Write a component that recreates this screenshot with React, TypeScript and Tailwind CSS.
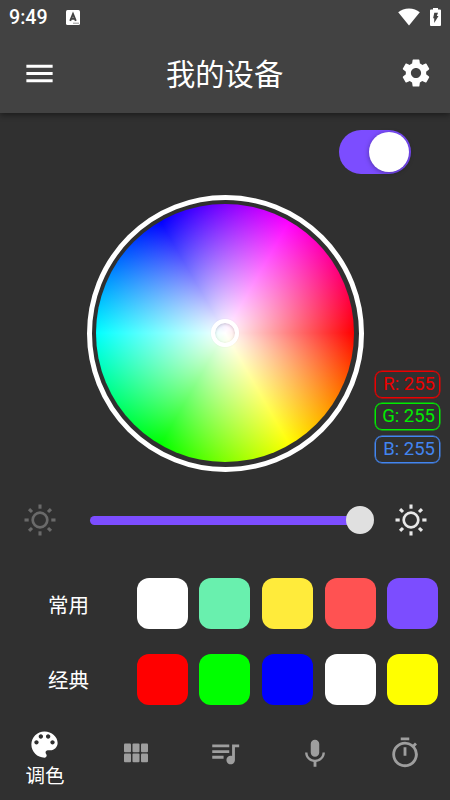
import { MdMenu, MdMic, MdOutlineTimer, MdQueueMusic, MdSettings } from 'react-icons/md';

const commonColors = ['#ffffff', '#69f0ae', '#ffeb3b', '#ff5252', '#7c4dff'];
const classicColors = ['#ff0000', '#00ff00', '#0000ff', '#ffffff', '#ffff00'];

const cjk = "font-['Noto_Sans_CJK_SC',sans-serif]";

function StatusBar() {
  return (
    <div className="flex h-[34px] items-center pl-[9px] pr-[9px]">
      <span className="w-[39px] pt-[2px] text-[19.600px] leading-none font-medium">9:49</span>
      <svg className="ml-[18px]" width="14" height="15" viewBox="0 0 14 15">
        <rect width="14" height="15" rx="1.5" fill="#fff" />
        <path d="M4.2 10.8 7 4l2.800 6.800M5.2 8.800h3.600" fill="none" stroke="#424242" strokeWidth="1.900" />
        <path d="M7 13.2h6" stroke="#777" strokeWidth="0.8" />
      </svg>
      <svg className="ml-auto" width="22" height="18" viewBox="0 0 22 18">
        <path d="M11 17.5 0.2 4.2C3 1.8 6.8 0.4 11 0.4s8 1.4 10.8 3.8z" fill="#fff" />
      </svg>
      <svg className="ml-[10px]" width="11" height="18" viewBox="0 0 11 18">
        <path d="M3 0h5v1.6h2a1 1 0 0 1 1 1V17a1 1 0 0 1-1 1H1a1 1 0 0 1-1-1V2.600a1 1 0 0 1 1-1h2z" fill="#fff" />
        <path d="M4.300 4.800h3.700L6.800 8h1.700L4.200 15V10.300H3.100z" fill="#424242" />
      </svg>
    </div>
  );
}

function Header() {
  return (
    <header className="h-[113px] bg-[#424242] shadow-[0_2px_6px_rgba(0,0,0,0.45)]">
      <StatusBar />
      <div className="flex h-[78px] items-center pl-[22px] pr-[17px]">
        <MdMenu size={35} />
        <h1 className={`ml-[109px] text-[29.300px] leading-none font-normal ${cjk}`}>我的设备</h1>
        <MdSettings className="ml-auto" size={34} />
      </div>
    </header>
  );
}

function ColorWheel() {
  return (
    <div className="h-[277px] w-[277px] rounded-full border-[5px] border-white p-[4.5px]">
      <div className="flex h-full w-full items-center justify-center rounded-full bg-[radial-gradient(closest-side,#fff,rgba(255,255,255,0)),conic-gradient(from_90deg,#f00,#ff0,#0f0,#0ff,#00f,#f0f,#f00)]">
        <div className="h-[28px] w-[28px] rounded-full border-4 border-white shadow-[0_0_2px_rgba(0,0,0,0.06),inset_0_1px_3px_rgba(0,0,0,0.18)]" />
      </div>
    </div>
  );
}

function Channel({ label, className }: { label: string; className: string }) {
  return (
    <div className={`flex h-[27px] w-[65px] items-center justify-end rounded-[7px] border pr-[4px] text-[18.500px] leading-none shadow-[0_0_0_0.5px_currentColor] ${className}`}>
      {label}
    </div>
  );
}

function Sun({ color }: { color: string }) {
  return (
    <svg width="32" height="32" viewBox="-16 -16 32 32" fill="none" stroke={color}>
      <circle r="7.300" strokeWidth="2.700" />
      {[0, 45, 90, 135, 180, 225, 270, 315].map((angle) => (
        <path key={angle} d="M11.300 0h4.200" strokeWidth="3.100" transform={`rotate(${angle})`} />
      ))}
    </svg>
  );
}

function Palette() {
  return (
    <svg width="35" height="35" viewBox="0 0 24 24" fill="currentColor">
      <path d="M12 3c-4.970 0-9 4.030-9 9s4.030 9 9 9c.83 0 1.500-.67 1.500-1.500 0-.39-.15-.74-.39-1.010-.23-.26-.38-.61-.38-.99 0-.83.67-1.500 1.500-1.500H16c2.760 0 5-2.240 5-5 0-4.420-4.030-8-9-8zm-5.500 9c-.83 0-1.500-.67-1.500-1.500S5.670 9 6.500 9 8 9.670 8 10.500 7.330 12 6.500 12zm3-4C8.670 8 8 7.330 8 6.500S8.670 5 9.500 5s1.500.67 1.500 1.500S10.330 8 9.500 8zm5 0c-.83 0-1.500-.67-1.500-1.500S13.670 5 14.500 5s1.500.67 1.500 1.500S15.330 8 14.500 8zm3 4c-.83 0-1.500-.67-1.500-1.500S16.670 9 17.500 9s1.500.67 1.500 1.500-.67 1.500-1.500 1.500z" />
    </svg>
  );
}

function Swatches({ title, colors }: { title: string; colors: string[] }) {
  return (
    <div className="flex h-[51.500px] items-center pl-[48px]">
      <span className={`w-[88.500px] text-[20.500px] leading-none ${cjk}`}>{title}</span>
      <div className="flex gap-[11.500px]">
        {colors.map((color, i) => (
          <div key={i} className="h-[51.300px] w-[51.200px] rounded-[12px]" style={{ backgroundColor: color }} />
        ))}
      </div>
    </div>
  );
}

function BottomNav() {
  return (
    <nav className="grid h-[84px] grid-cols-5 justify-items-center text-[#9e9e9e]">
      <div className="flex flex-col items-center pt-[11px] text-white">
        <Palette />
        <span className={`mt-[3px] text-[19.500px] leading-none ${cjk}`}>调色</span>
      </div>
      <svg className="mt-[27px] ml-[2px]" width="24" height="20" viewBox="0 0 24 20" fill="currentColor">
        {[0, 8.500, 17].map((x) => (
          <g key={x}>
            <rect x={x} y="0.500" width="7" height="8.700" rx="1" />
            <rect x={x} y="10.600" width="7" height="8.700" rx="1" />
          </g>
        ))}
      </svg>
      <MdQueueMusic className="mt-[20px]" size={34} />
      <MdMic className="mt-[21px]" size={34} />
      <MdOutlineTimer className="mt-[20px]" size={34} />
    </nav>
  );
}

export default function App() {
  return (
    <div className="flex h-[800px] w-[450px] flex-col overflow-hidden bg-[#303030] font-[Roboto,'Noto_Sans_CJK_SC',sans-serif] text-white">
      <Header />
      <div className="flex justify-end pt-[17px] pr-[39.500px]">
        <div className="flex h-[44px] w-[72px] items-center justify-end rounded-full bg-[#7c4dff] pr-[2px]">
          <div className="h-10 w-10 rounded-full bg-white shadow-[0_1px_5px_rgba(0,0,0,0.35)]" />
        </div>
      </div>
      <div className="mt-[20.500px] flex items-end justify-between pl-[86.500px] pr-[10px]">
        <ColorWheel />
        <div className="mb-[9px] flex flex-col gap-[5.500px]">
          <Channel label="R: 255" className="border-[#ec0000] text-[#ec0000]" />
          <Channel label="G: 255" className="border-[#00ec00] text-[#00ec00]" />
          <Channel label="B: 255" className="border-[#4285f0] text-[#4285f0]" />
        </div>
      </div>
      <div className="mt-[32.500px] flex h-[32px] items-center pl-[23.500px]">
        <Sun color="#6a6a6a" />
        <div className="ml-[34.500px] flex w-[284px] items-center">
          <div className="h-[9px] flex-1 rounded-l-full bg-[#7c4dff]" />
          <div className="-ml-px h-[28.500px] w-[28.500px] rounded-full bg-[#e0e0e0]" />
        </div>
        <div className="ml-[20.500px]">
          <Sun color="#e8e8e8" />
        </div>
      </div>
      <div className="mt-[42px] flex flex-col gap-[24px]">
        <Swatches title="常用" colors={commonColors} />
        <Swatches title="经典" colors={classicColors} />
      </div>
      <div className="mt-auto">
        <BottomNav />
      </div>
    </div>
  );
}
